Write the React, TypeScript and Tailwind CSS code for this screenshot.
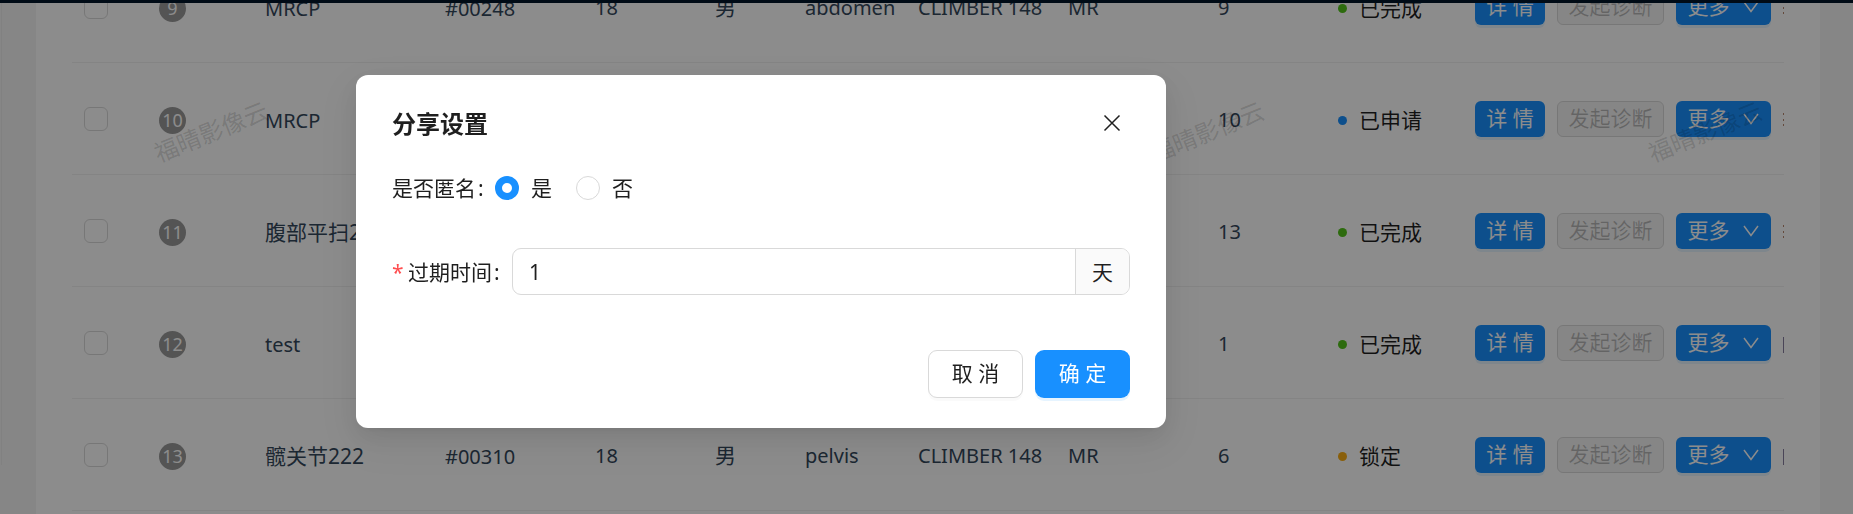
import { useState } from 'react'

type Study = {
  no: number
  name: string
  patientId?: string
  age?: number
  sex?: string
  part?: string
  device?: string
  modality?: string
  count: number
  status: 'done' | 'applied' | 'locked'
  extra: string
}

const STATUS = {
  done: { label: '已完成', dot: 'bg-[#52c41a]' },
  applied: { label: '已申请', dot: 'bg-[#1890ff]' },
  locked: { label: '锁定', dot: 'bg-[#faad14]' },
}

const studies: Study[] = [
  { no: 9, name: 'MRCP', patientId: '#00248', age: 18, sex: '男', part: 'abdomen', device: 'CLIMBER 148', modality: 'MR', count: 9, status: 'done', extra: '⋮' },
  { no: 10, name: 'MRCP', count: 10, status: 'applied', extra: '⋮' },
  { no: 11, name: '腹部平扫2', count: 13, status: 'done', extra: '⋮' },
  { no: 12, name: 'test', count: 1, status: 'done', extra: '|' },
  { no: 13, name: '髋关节222', patientId: '#00310', age: 18, sex: '男', part: 'pelvis', device: 'CLIMBER 148', modality: 'MR', count: 6, status: 'locked', extra: '|' },
]

const smallPrimary =
  'h-9 shrink-0 rounded-md bg-[#1890ff] text-white shadow-[0_3px_0_rgba(5,145,255,0.1)] flex items-center justify-center whitespace-pre'

function StudyRow({ study }: { study: Study }) {
  const status = STATUS[study.status]
  return (
    <tr className="h-[112px] text-[20px] text-[#33475b] [&>td]:border-b [&>td]:border-[#f0f0f0] [&>td]:px-3 [&>td]:whitespace-nowrap">
      <td>
        <input
          type="checkbox"
          aria-label={`选择 ${study.no}`}
          className="block w-6 h-6 appearance-none rounded-md border border-[#d9d9d9] bg-white"
        />
      </td>
      <td className="pt-1">
        <span className="flex w-[27px] h-[27px] items-center justify-center rounded-full bg-[#999] text-[18px] text-white">
          {study.no}
        </span>
      </td>
      <td className={/^[\x00-\x7f]*$/.test(study.name) ? 'pt-1 text-[20px]' : 'pt-1 text-[21px]'}>{study.name}</td>
      <td className="pt-1">{study.patientId}</td>
      <td className="pt-0.5">{study.age}</td>
      <td className="pt-0.5 text-[21px]">{study.sex}</td>
      <td className="pt-0.5">{study.part}</td>
      <td className="pt-0.5">{study.device}</td>
      <td className="pt-0.5">{study.modality}</td>
      <td className="pt-0.5">{study.count}</td>
      <td className="pt-1">
        <span className="flex items-center gap-3 text-[21px] text-black/88">
          <span className={`w-[9px] h-[9px] rounded-full ${status.dot}`} />
          {status.label}
        </span>
      </td>
      <td>
        <div className="flex items-center gap-3 text-[21px]">
          <button type="button" className={`${smallPrimary} w-[70px]`}>详 情</button>
          <button
            type="button"
            disabled
            className="flex h-9 w-[107px] shrink-0 items-center justify-center rounded-md border border-[#d9d9d9] bg-black/4 text-black/25"
          >
            发起诊断
          </button>
          <button type="button" className={`${smallPrimary} w-[95px] gap-3`}>
            更多
            <svg viewBox="0 0 18 18" className="w-[18px] h-[18px]" fill="none" stroke="currentColor" strokeWidth="1.5">
              <path d="M2 4l7 9.5L16 4" />
            </svg>
          </button>
          <span className="flex w-px shrink-0 justify-center overflow-hidden text-[16px] text-black/60">{study.extra}</span>
        </div>
      </td>
    </tr>
  )
}

function Watermark() {
  return (
    <div className="pointer-events-none absolute top-[116px] left-[151px] flex gap-[378px]">
      {[0, 1, 2, 3].map(i => (
        <span key={i} className="w-[120px] shrink-0 -rotate-[22deg] text-center text-[24px] leading-8 whitespace-nowrap text-black/15">
          福晴影像云
        </span>
      ))}
    </div>
  )
}

function ShareDialog() {
  const [anonymous, setAnonymous] = useState(true)
  const [days, setDays] = useState('1')
  const radio =
    'w-6 h-6 appearance-none rounded-full border border-[#d9d9d9] bg-white checked:border-[7px] checked:border-[#1890ff]'

  return (
    <div className="fixed inset-0 z-20 flex items-start justify-center bg-black/45 pt-[75px] pr-[331px]">
      <form
        role="dialog"
        aria-labelledby="share-title"
        onSubmit={e => e.preventDefault()}
        className="w-[810px] rounded-xl bg-white px-9 py-[30px] text-[21px] text-black/88 shadow-[0_9px_24px_rgba(0,0,0,0.08),0_4px_9px_-6px_rgba(0,0,0,0.12),0_14px_42px_12px_rgba(0,0,0,0.05)]"
      >
        <div className="flex h-9 items-center justify-between">
          <h2 id="share-title" className="pt-0.5 text-[24px] leading-9 font-bold">分享设置</h2>
          <button type="button" aria-label="关闭" className="mr-0.5 flex w-8 h-8 items-center justify-center">
            <svg viewBox="0 0 18 18" className="w-[18px] h-[18px]" fill="none" stroke="currentColor" strokeWidth="1.5">
              <path d="M1.5 1.5l15 15M16.5 1.5l-15 15" />
            </svg>
          </button>
        </div>

        <fieldset className="mt-[23px] flex h-12 items-center">
          <legend className="float-left flex w-[103px] gap-0.5 pt-0.5">
            是否匿名<span>:</span>
          </legend>
          <label className="flex items-center gap-3">
            <input type="radio" name="anonymous" checked={anonymous} onChange={() => setAnonymous(true)} className={radio} />
            <span className="pt-0.5">是</span>
          </label>
          <label className="ml-6 flex items-center gap-3">
            <input type="radio" name="anonymous" checked={!anonymous} onChange={() => setAnonymous(false)} className={radio} />
            <span className="pt-0.5">否</span>
          </label>
        </fieldset>

        <div className="mt-9 flex h-[47px] items-center">
          <label htmlFor="expire-days" className="flex w-[120px] shrink-0 items-center gap-0.5 pt-0.5">
            <span className="w-3.5 text-[#ff4d4f]">*</span>
            过期时间<span>:</span>
          </label>
          <div className="flex h-full min-w-0 flex-1 overflow-hidden rounded-[9px] border border-[#d9d9d9]">
            <input
              id="expire-days"
              value={days}
              onChange={e => setDays(e.target.value)}
              className="min-w-0 flex-1 px-4 pt-0.5 outline-none"
            />
            <span className="flex items-center border-l border-[#d9d9d9] bg-[#fafafa] px-4 pt-0.5">天</span>
          </div>
        </div>

        <div className="mt-[55px] flex justify-end gap-3">
          <button type="button" className="h-12 w-[95px] rounded-[9px] border border-[#d9d9d9] bg-white shadow-[0_3px_0_rgba(0,0,0,0.02)]">
            取 消
          </button>
          <button type="submit" className="h-12 w-[95px] rounded-[9px] bg-[#1890ff] text-white shadow-[0_3px_0_rgba(5,145,255,0.1)]">
            确 定
          </button>
        </div>
      </form>
    </div>
  )
}

export default function App() {
  return (
    <div className="relative h-screen overflow-hidden bg-[#f5f5f5] font-['Noto_Sans','Noto_Sans_CJK_SC',sans-serif]">
      <header className="relative z-10 h-[3px] bg-[#001529]" />
      <main className="ml-px h-full border-l border-[#ebebeb] pr-[33px] pl-[34px]">
        {/* list is scrolled partway under the header */}
        <div className="-mt-[52px] min-h-[calc(100%+52px)] bg-white px-9">
          <div className="overflow-hidden">
            <table className="w-full table-fixed border-separate border-spacing-0 text-left">
              <colgroup>
                <col className="w-[75px]" />
                <col className="w-[106px]" />
                <col className="w-[180px]" />
                <col className="w-[150px]" />
                <col className="w-[120px]" />
                <col className="w-[90px]" />
                <col className="w-[113px]" />
                <col className="w-[150px]" />
                <col className="w-[150px]" />
                <col className="w-[120px]" />
                <col className="w-[137px]" />
                <col />
              </colgroup>
              <tbody>
                {studies.map(s => (
                  <StudyRow key={s.no} study={s} />
                ))}
              </tbody>
            </table>
          </div>
        </div>
      </main>
      <Watermark />
      <ShareDialog />
    </div>
  )
}
